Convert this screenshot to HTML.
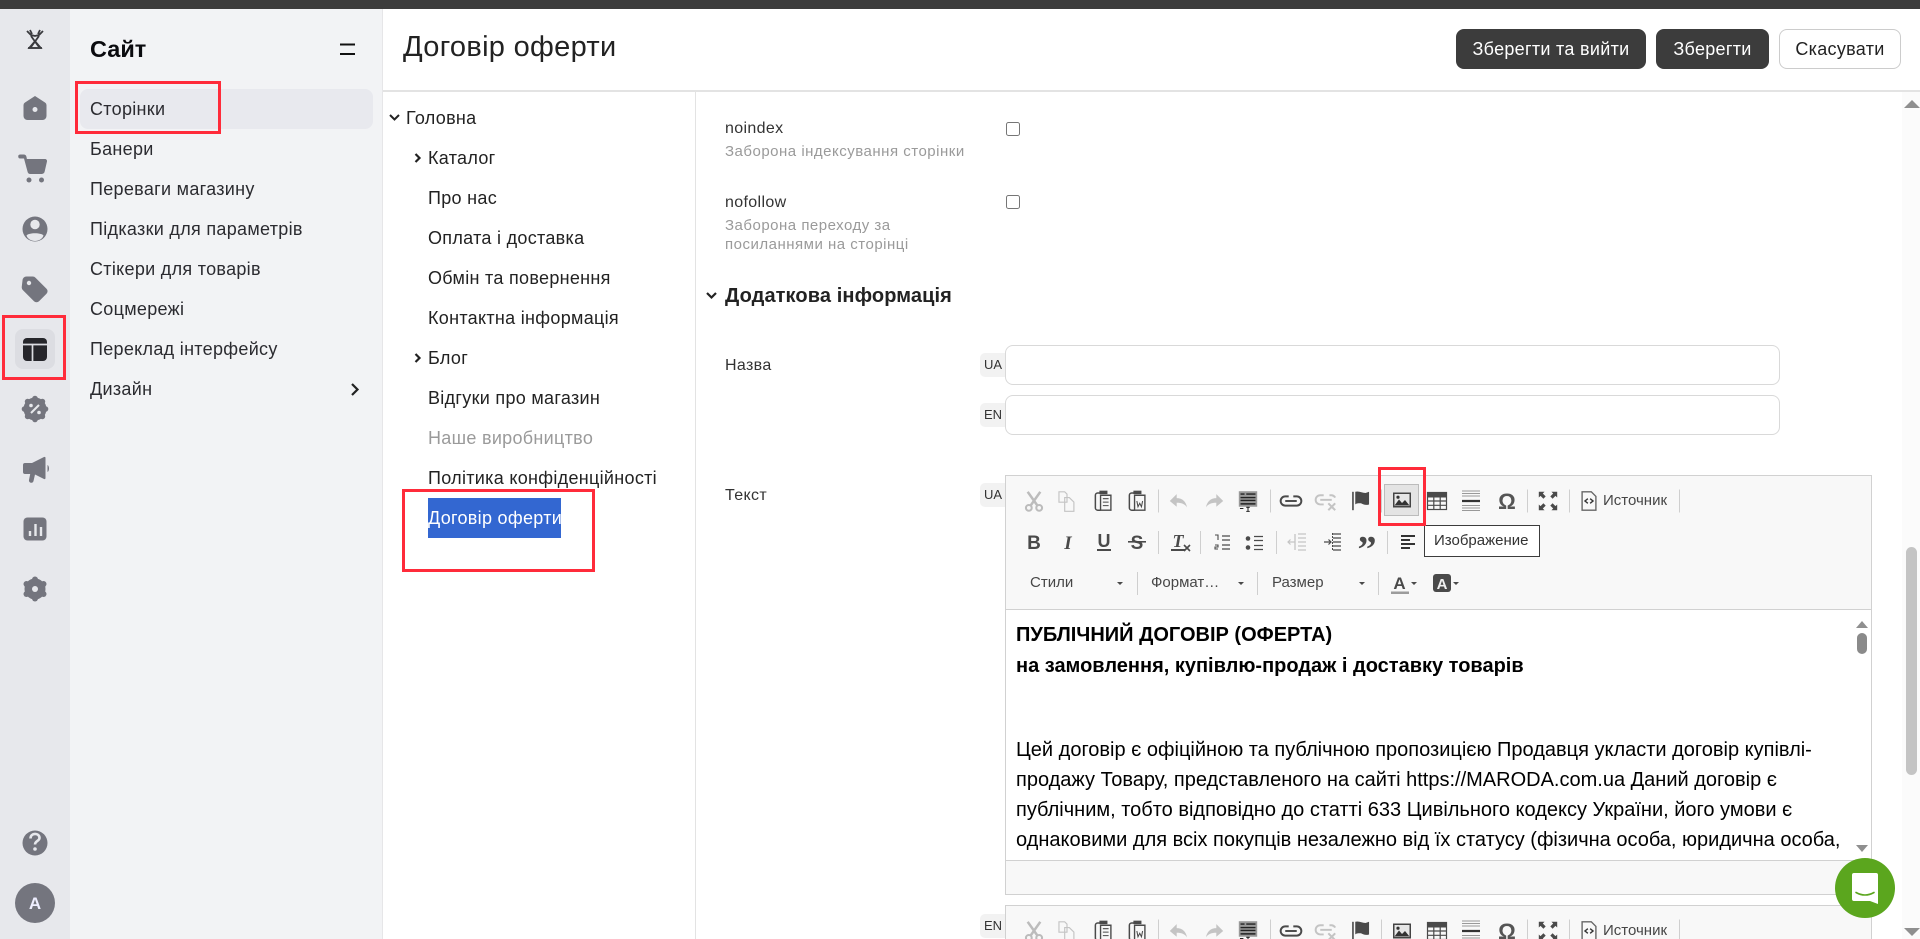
<!DOCTYPE html>
<html lang="uk"><head><meta charset="utf-8"><title>Договір оферти</title>
<style>
*{box-sizing:border-box}
html,body{margin:0;padding:0;width:1920px;height:939px;overflow:hidden;background:#fff}
body{position:relative;font-family:"Liberation Sans",sans-serif;color:#26262b}
.a{position:absolute}
.t{position:absolute;white-space:nowrap;line-height:40px;height:40px;font-size:18px}
.side{letter-spacing:.3px;color:#2b2b30}
.tree{letter-spacing:.3px;color:#222}
.lab{font-size:16px;letter-spacing:.35px;color:#333;margin-top:1px}
.sm{font-size:15px;letter-spacing:.5px;color:#9a9a9a}
.red{position:absolute;border:3px solid #ff2b3a}
.btn{position:absolute;top:29px;height:40px;border-radius:8px;line-height:40px;text-align:center;font-size:18px;letter-spacing:.3px;white-space:nowrap}
.dark{background:#3c3c3c;color:#fff}
.tag{position:absolute;left:980px;width:26px;height:24px;line-height:23px;background:#f2f2f2;border-radius:5px 0 0 5px;font-size:13px;color:#333;text-align:center}
.inp{position:absolute;left:1005px;width:775px;height:40px;border:1px solid #d9d9d9;border-radius:8px;background:#fff}
.cb{position:absolute;left:1006px;width:14px;height:14px;border:1.5px solid #767676;border-radius:2.5px;background:#fff}
.c{position:absolute;left:1016px;white-space:nowrap;font-size:20px;line-height:30px;height:30px;color:#000}
.k{position:absolute;white-space:nowrap;font-size:15px;line-height:20px;color:#474747}
</style></head><body>
<div class="a" style="left:0;top:0;width:1920px;height:9px;background:#3c3c3c"></div>
<div class="a" style="left:0;top:9px;width:70px;height:930px;background:#e7e8ec"></div>
<div class="a" style="left:70px;top:9px;width:313px;height:930px;background:#f2f3f5;border-right:1px solid #e6e6e8"></div>
<div class="a" style="left:383px;top:90px;width:1537px;height:2px;background:#e3e3e3"></div>
<div class="a" style="left:695px;top:91px;width:1px;height:848px;background:#e3e3e3"></div>
<div class="a" style="left:1902px;top:92px;width:18px;height:847px;background:#fbfbfb"></div>
<div class="a" style="left:1906px;top:547px;width:11px;height:228px;background:#c4c4c4;border-radius:6px"></div>
<div class="a" style="left:15px;top:329px;width:40px;height:40px;background:#dcdde2;border-radius:8px"></div>
<div class="a" style="left:80px;top:89px;width:293px;height:40px;background:#e8e9ee;border-radius:8px"></div>

<div class="t" style="left:90px;top:29px;font-size:23.500px;font-weight:700;color:#0b0b0f">Сайт</div>
<div class="t side" style="left:90px;top:89px">Сторінки</div>
<div class="t side" style="left:90px;top:129px">Банери</div>
<div class="t side" style="left:90px;top:169px">Переваги магазину</div>
<div class="t side" style="left:90px;top:209px">Підказки для параметрів</div>
<div class="t side" style="left:90px;top:249px">Стікери для товарів</div>
<div class="t side" style="left:90px;top:289px">Соцмережі</div>
<div class="t side" style="left:90px;top:329px">Переклад інтерфейсу</div>
<div class="t side" style="left:90px;top:369px">Дизайн</div>

<div class="t" style="left:403px;top:27px;font-size:29px;color:#222;letter-spacing:.3px">Договір оферти</div>
<div class="btn dark" style="left:1456px;width:190px">Зберегти та вийти</div>
<div class="btn dark" style="left:1656px;width:113px">Зберегти</div>
<div class="btn" style="left:1779px;width:122px;background:#fff;border:1px solid #ccc;color:#222;line-height:38px">Скасувати</div>

<div class="t tree" style="left:406px;top:98px">Головна</div>
<div class="t tree" style="left:428px;top:138px">Каталог</div>
<div class="t tree" style="left:428px;top:178px">Про нас</div>
<div class="t tree" style="left:428px;top:218px">Оплата і доставка</div>
<div class="t tree" style="left:428px;top:258px">Обмін та повернення</div>
<div class="t tree" style="left:428px;top:298px">Контактна інформація</div>
<div class="t tree" style="left:428px;top:338px">Блог</div>
<div class="t tree" style="left:428px;top:378px">Відгуки про магазин</div>
<div class="t tree" style="left:428px;top:418px;color:#9a9a9a">Наше виробництво</div>
<div class="t tree" style="left:428px;top:458px">Політика конфіденційності</div>
<div class="a" style="left:428px;top:498px;width:133px;height:40px;background:#3367d1"></div>
<div class="t tree" style="left:428px;top:498px;color:#fff">Договір оферти</div>

<div class="t lab" style="left:725px;top:108px">noindex</div>
<div class="t sm" style="left:725px;top:132px">Заборона індексування сторінки</div>
<div class="cb" style="top:122px"></div>
<div class="t lab" style="left:725px;top:182px">nofollow</div>
<div class="t sm" style="left:725px;top:206px">Заборона переходу за</div>
<div class="t sm" style="left:725px;top:225px">посиланнями на сторінці</div>
<div class="cb" style="top:195px"></div>
<div class="t" style="left:725px;top:276px;font-size:20px;font-weight:700;color:#222;letter-spacing:.1px">Додаткова інформація</div>
<div class="t lab" style="left:725px;top:345px">Назва</div>
<div class="tag" style="top:353px">UA</div>
<div class="inp" style="top:345px"></div>
<div class="tag" style="top:403px">EN</div>
<div class="inp" style="top:395px"></div>
<div class="t lab" style="left:725px;top:475px">Текст</div>
<div class="tag" style="top:483px">UA</div>
<div class="tag" style="top:914px">EN</div>

<!-- editor 1 -->
<div class="a" style="left:1005px;top:475px;width:867px;height:420px;background:#f8f8f8;border:1px solid #d1d1d1"></div>
<div class="a" style="left:1006px;top:609px;width:865px;height:252px;background:#fff;border-top:1px solid #d1d1d1;border-bottom:1px solid #d1d1d1"></div>
<div class="a" style="left:1005px;top:905px;width:867px;height:40px;background:#f8f8f8;border:1px solid #d1d1d1"></div>

<div class="c" style="top:620px;font-weight:700">ПУБЛІЧНИЙ ДОГОВІР (ОФЕРТА)</div>
<div class="c" style="top:651px;font-weight:700">на замовлення, купівлю-продаж і доставку товарів</div>
<div class="c" style="top:735px">Цей договір є офіційною та публічною пропозицією Продавця укласти договір купівлі-</div>
<div class="c" style="top:765px">продажу Товару, представленого на сайті https://MARODA.com.ua Даний договір є</div>
<div class="c" style="top:795px">публічним, тобто відповідно до статті 633 Цивільного кодексу України, його умови є</div>
<div class="c" style="top:825px">однаковими для всіх покупців незалежно від їх статусу (фізична особа, юридична особа,</div>

<div class="k" style="left:1030px;top:573px">Стили</div>
<div class="k" style="left:1151px;top:573px">Формат…</div>
<div class="k" style="left:1272px;top:573px">Размер</div>
<div class="k" style="left:1603px;top:491px">Источник</div>
<div class="k" style="left:1603px;top:921px">Источник</div>

<svg class="a" style="left:0;top:0" width="1920" height="939" viewBox="0 0 1920 939">
<defs>
<symbol id="cut" overflow="visible"><g transform="scale(1.15)"><path d="M-5.500-8 3 4M5.500-8-3 4" stroke="currentColor" stroke-width="2.200" fill="none"/><circle cx="-4.500" cy="6" r="2.500" fill="none" stroke="currentColor" stroke-width="1.800"/><circle cx="4.500" cy="6" r="2.500" fill="none" stroke="currentColor" stroke-width="1.800"/></g></symbol>
<symbol id="copy" overflow="visible"><g transform="scale(1.15)"><path d="M-7-8h5l2 2v7h-7zM-2-3h4l4 4v8h-8z" fill="#f8f8f8" stroke="currentColor" stroke-width="1"/></g></symbol>
<symbol id="paste" overflow="visible"><g transform="scale(1.15)"><path d="M-3-7h-2.500a2 2 0 0 0-2 2V6a2 2 0 0 0 2 2H-3" fill="none" stroke="currentColor" stroke-width="1.300"/><rect x="-4" y="-9" width="7" height="3" fill="currentColor"/><path d="M-3-5h9v13h-9z" fill="#f8f8f8" stroke="currentColor" stroke-width="1.200"/><path d="M-1-2h5M-1 1h5M-1 4h5" stroke="currentColor" stroke-width=".9"/></g></symbol>
<symbol id="pasteW" overflow="visible"><g transform="scale(1.15)"><path d="M-3-7h-2.500a2 2 0 0 0-2 2V6a2 2 0 0 0 2 2H-3" fill="none" stroke="currentColor" stroke-width="1.300"/><rect x="-4" y="-9" width="7" height="3" fill="currentColor"/><path d="M-3-5h9v13h-9z" fill="#f8f8f8" stroke="currentColor" stroke-width="1.200"/><path d="M-1 0l1 5 1.500-3 1.500 3 1-5" stroke="currentColor" fill="none" stroke-width=".9"/></g></symbol>
<symbol id="undo" overflow="visible"><g transform="scale(1.15)"><path d="M-8 0l6-6v3.500c5 0 8 3 9 8-2-3-5-4-9-4V5z" fill="currentColor"/></g></symbol>
<symbol id="redo" overflow="visible"><g transform="scale(1.15)"><path d="M8 0L2-6v3.500c-5 0-8 3-9 8 2-3 5-4 9-4V5z" fill="currentColor"/></g></symbol>
<symbol id="tpl" overflow="visible"><g transform="scale(1.15)"><rect x="-8" y="-8.500" width="16" height="13.500" fill="#999"/><path d="M-6.500-6h3.500M-1.500-6h8M-6.500-3h13M-6.500-.5h13M-6.500 2.500h13" stroke="#222" stroke-width="1.200"/><path d="M-7 6.500h3M0 5.500v3.500M-1.500 5.500h3M-1.500 9h3" stroke="#222" stroke-width=".9"/></g></symbol>
<symbol id="link" overflow="visible"><g transform="scale(1.15)"><path d="M-2-4h-3a4 4 0 0 0 0 8h10a4 4 0 0 0 0-8H2" fill="none" stroke="currentColor" stroke-width="1.700"/><path d="M-5 0H5" stroke="currentColor" stroke-width="1.700"/></g></symbol>
<symbol id="unlink" overflow="visible"><g transform="scale(1.15)"><path d="M-2-5h-3a4 4 0 0 0 0 8h3M3-5h2a4 4 0 0 1 3 2" fill="none" stroke="currentColor" stroke-width="1.700"/><path d="M-5-1H5" stroke="currentColor" stroke-width="1.700"/><path d="M2 2l6 6M8 2l-6 6" stroke="currentColor" stroke-width="1.800"/></g></symbol>
<symbol id="flag" overflow="visible"><g transform="scale(1.15)"><path d="M-7-8v16" stroke="currentColor" stroke-width="1.400"/><path d="M-5-8c3-1 6 1 9 1l3-1V3c-3 1-5 0-7-1-2 0-4 0-5 1z" fill="currentColor"/></g></symbol>
<symbol id="img" overflow="visible"><rect x="-9" y="-7.500" width="18" height="15" fill="#444"/><rect x="-7.500" y="-6" width="15" height="12" fill="#e6e6e6"/><circle cx="-4" cy="-2.800" r="1.600" fill="#333"/><path d="M-7.500 5.500l4.500-6 3 3.500 3-3 4.500 5.500z" fill="#333"/></symbol>
<symbol id="tbl" overflow="visible"><rect x="-9.500" y="-8.500" width="19" height="17" fill="#f8f8f8" stroke="currentColor" stroke-width="1.200"/><rect x="-9.500" y="-8.500" width="19" height="5" fill="currentColor"/><path d="M-9.500 0h19M-9.500 4.300h19M-3.200-3.500V8.500M3.200-3.500V8.500" stroke="currentColor" stroke-width="1.200"/></symbol>
<symbol id="hr" overflow="visible"><path d="M-9-10h18M-9-7.500h18M-9-5h18M-9 4.500h18M-9 7h18M-9 9.500h18" stroke="#999"/><path d="M-9 0h18" stroke="#333" stroke-width="2.200"/></symbol>
<symbol id="max" overflow="visible"><g transform="scale(1.15)"><path d="M-8-8h5l-1.500 1.500 2.500 2.500-2 2-2.500-2.500L-8-3zM8-8v5l-1.500-1.500-2.500 2.500-2-2 2.500-2.500L3-8zM-8 8v-5l1.500 1.500 2.500-2.500 2 2-2.500 2.500L-3 8zM8 8H3l1.500-1.500-2.500-2.500 2-2 2.500 2.500L8 3z" fill="currentColor"/></g></symbol>
<symbol id="src" overflow="visible"><g transform="scale(1.15)"><path d="M-6-8h8l4 4v12h-12z" fill="#f8f8f8" stroke="#666" stroke-width="1.200"/><path d="M-1-2l-2.500 2 2.500 2M1-2l2.500 2-2.500 2" stroke="#333" stroke-width="1.200" fill="none"/></g></symbol>
<symbol id="sep" overflow="visible"><rect x="0" y="-11.500" width="1" height="23" fill="#cfcfcf"/></symbol>
</defs>

<!-- rail icons -->
<g fill="#74757e">
<path d="M35 96 45 102.500a3 3 0 0 1 1.500 2.500V116a4 4 0 0 1-4 4h-15a4 4 0 0 1-4-4V105a3 3 0 0 1 1.500-2.500z"/><circle cx="35" cy="109.500" r="2.500" fill="#e7e8ec"/>
<path d="M20 154.500h3.500a3 3 0 0 1 3 2.500l.4 2H45a2 2 0 0 1 2 2.400l-2.300 10a3 3 0 0 1-3 2.600H30.500a3 3 0 0 1-3-2.500L24 158.500h-3.500a2 2 0 0 1-.5-4z"/><circle cx="29" cy="180" r="2.500"/><circle cx="41.500" cy="180" r="2.500"/>
<circle cx="35" cy="229" r="12.500"/><circle cx="35" cy="224.500" r="4.700" fill="#e7e8ec"/><path d="M26.500 235.500c2-3 15-3 17 0-1 3.500-5 5.500-8.500 5.500s-7.500-2-8.500-5.500z" fill="#e7e8ec"/>
<path d="M22.500 280.500a4 4 0 0 1 4-4h6a4 4 0 0 1 3 1.200l11 11a3.500 3.500 0 0 1 0 5l-7.500 7.500a3.500 3.500 0 0 1-5 0l-11-11a4 4 0 0 1-1.300-3z"/><circle cx="29" cy="283" r="2.200" fill="#e7e8ec"/>
<circle cx="35" cy="409" r="11.500"/><circle cx="45.500" cy="409" r="2.800"/><circle cx="24.500" cy="409" r="2.800"/><circle cx="35" cy="398.500" r="2.800"/><circle cx="35" cy="419.500" r="2.800"/><circle cx="42.400" cy="401.600" r="2.800"/><circle cx="27.600" cy="401.600" r="2.800"/><circle cx="42.400" cy="416.400" r="2.800"/><circle cx="27.600" cy="416.400" r="2.800"/>
<path d="M31 413l8-8" stroke="#e7e8ec" stroke-width="2"/><circle cx="31" cy="405.500" r="1.800" fill="#e7e8ec"/><circle cx="39" cy="412.500" r="1.800" fill="#e7e8ec"/>
<path d="M25 463h7l12-6a1 1 0 0 1 1.500 1v20a1 1 0 0 1-1.500 1l-9-4.500-1.500 6.500a2.300 2.300 0 0 1-4.500-1l1.200-6H25a2 2 0 0 1-2-2v-7a2 2 0 0 1 2-2z"/><path d="M47.500 465c2 1 2 6 0 7z"/>
<rect x="23.500" y="517.500" width="23" height="23" rx="4"/><path d="M30 531v5M35.500 524v12M41 527v9" stroke="#e7e8ec" stroke-width="2.400"/>
<circle cx="35" cy="589" r="10.500"/><circle cx="35" cy="579.500" r="3"/><circle cx="35" cy="598.500" r="3"/><circle cx="43.500" cy="584" r="3"/><circle cx="43.500" cy="594" r="3"/><circle cx="26.500" cy="584" r="3"/><circle cx="26.500" cy="594" r="3"/><circle cx="35" cy="589" r="3" fill="#e7e8ec"/>
<circle cx="35" cy="843" r="12.500"/><circle cx="35" cy="903" r="20"/>
</g>
<path d="M30.500 838.500c0-6 9-6 9-.5 0 3-4.500 3-4.500 6.500" fill="none" stroke="#e7e8ec" stroke-width="2.600"/><circle cx="35" cy="849" r="1.800" fill="#e7e8ec"/>
<text x="35" y="909" text-anchor="middle" font-family="Liberation Sans" font-weight="700" font-size="17" fill="#eef">A</text>
<rect x="23" y="338" width="24" height="23" rx="4" fill="#26262b"/><path d="M23 344.500h24M32.500 344.500V361" stroke="#dcdde2" stroke-width="1.700"/>
<!-- logo -->
<g fill="none" stroke="#3a3a3e" stroke-width="1.800"><path d="M27 31l4 4 4 1 4-1 4-4M30 30l2 4M40 30l-2 4M31 36l8 11M39 36l-8 11M28 48h14"/><path d="M35 41l6 7H29z" stroke-width="1.500"/></g>

<!-- small chevrons -->
<g fill="none" stroke="#222" stroke-width="2">
<path d="M340 44.500h15M340 54h15" stroke="#111"/>
<path d="M352 384l5.500 5.500-5.500 5.500" stroke-width="2.200"/>
<path d="M390 115l4.500 4.500 4.500-4.500"/>
<path d="M415.500 154l4 4-4 4" stroke-width="2.200"/>
<path d="M415.500 354l4 4-4 4" stroke-width="2.200"/>
<path d="M707 293l4.500 4.500 4.500-4.500" stroke-width="2.200"/>
</g>
<path d="M1904 108l8-8 8 8z" fill="#8f8f8f"/>
<path d="M1904 928h16l-8 8z" fill="#8f8f8f"/>

<!-- toolbar 1 -->
<rect x="1384.500" y="484.500" width="34" height="31" fill="#e4e4e4" stroke="#bcbcbc"/>
<g color="#4a4a4a">
<use href="#cut" x="1034" y="501" color="#bcbcbc"/><use href="#copy" x="1067" y="501" color="#c4c4c4"/><use href="#paste" x="1104" y="501"/><use href="#pasteW" x="1138" y="501"/>
<use href="#sep" x="1158" y="501"/>
<use href="#undo" x="1179" y="501" color="#c4c4c4"/><use href="#redo" x="1214" y="501" color="#c4c4c4"/><use href="#tpl" x="1248" y="501"/>
<use href="#sep" x="1270" y="501"/>
<use href="#link" x="1291" y="501"/><use href="#unlink" x="1326" y="501" color="#c4c4c4"/><use href="#flag" x="1361" y="501"/>
<use href="#sep" x="1381" y="501"/>
<use href="#img" x="1402" y="500"/><use href="#tbl" x="1437" y="501"/><use href="#hr" x="1471" y="501"/>
<text x="1507" y="509" text-anchor="middle" font-family="Liberation Sans" font-weight="700" font-size="22" fill="#555">Ω</text>
<use href="#sep" x="1527" y="501"/><use href="#max" x="1548" y="501"/><use href="#sep" x="1569" y="501"/><use href="#src" x="1589" y="501"/><use href="#sep" x="1679" y="501"/>
</g>
<g color="#4a4a4a">
<use href="#cut" x="1034" y="931" color="#bcbcbc"/><use href="#copy" x="1067" y="931" color="#c4c4c4"/><use href="#paste" x="1104" y="931"/><use href="#pasteW" x="1138" y="931"/>
<use href="#sep" x="1158" y="931"/>
<use href="#undo" x="1179" y="931" color="#c4c4c4"/><use href="#redo" x="1214" y="931" color="#c4c4c4"/><use href="#tpl" x="1248" y="931"/>
<use href="#sep" x="1270" y="931"/>
<use href="#link" x="1291" y="931"/><use href="#unlink" x="1326" y="931" color="#c4c4c4"/><use href="#flag" x="1361" y="931"/>
<use href="#sep" x="1381" y="931"/>
<use href="#img" x="1402" y="931"/><use href="#tbl" x="1437" y="931"/><use href="#hr" x="1471" y="931"/>
<text x="1507" y="939" text-anchor="middle" font-family="Liberation Sans" font-weight="700" font-size="22" fill="#555">Ω</text>
<use href="#sep" x="1527" y="931"/><use href="#max" x="1548" y="931"/><use href="#sep" x="1569" y="931"/><use href="#src" x="1589" y="931"/><use href="#sep" x="1679" y="931"/>
</g>
<!-- row 2 -->
<g font-family="Liberation Sans" font-size="19" font-weight="700" fill="#4a4a4a" text-anchor="middle">
<text x="1034" y="549">B</text>
<text x="1068" y="549" font-style="italic" font-family="Liberation Serif">I</text>
<text x="1104" y="547" font-size="18">U</text><rect x="1097" y="549" width="14" height="2"/>
<text x="1137" y="549">S</text><rect x="1128" y="541" width="18" height="1.600"/>
<text x="1178" y="547" font-style="italic" font-family="Liberation Serif" font-size="18">T</text><rect x="1171" y="549" width="14" height="2"/>
<path d="M1184 545l6 6M1190 545l-6 6" stroke="#4a4a4a" stroke-width="1.600"/>
</g>
<g stroke="#4a4a4a" fill="none">
<path d="M1222 536h8M1222 540h8M1222 545h8M1222 549h8" stroke-width="1.300"/><path d="M1215 535h3v5M1215 545h3v2h-3v2h3" stroke-width="1.100"/>
<path d="M1255 536.500h9M1255 540.500h9M1255 545.500h9M1255 549.500h9" stroke-width="1.300" transform="translate(-1)"/>
<circle cx="1248" cy="538.500" r="2.300" fill="#4a4a4a" stroke="none"/><circle cx="1248" cy="547.500" r="2.300" fill="#4a4a4a" stroke="none"/>
<path d="M1298 534h8M1298 538h8M1298 542h8M1298 546h8M1298 550h8M1295 534v16" stroke="#c4c4c4" stroke-width="1.300"/><path d="M1295 542h-7m2.500-2.500L1288 542l2.500 2.500" stroke="#c4c4c4" stroke-width="1.200"/>
<path d="M1333 534h8M1333 538h8M1333 542h8M1333 546h8M1333 550h8" stroke-width="1.300"/><path d="M1324 542h7m-2.500-2.500L1331 542l-2.500 2.500" stroke-width="1.200"/><path d="M1332.500 533v18" stroke-width="1" stroke-dasharray="2 1"/>
<path d="M1401 536h14M1401 540h9M1401 544h14M1401 548h9" stroke="#333" stroke-width="2"/>
</g>
<text x="1367" y="562" text-anchor="middle" font-family="Liberation Serif" font-weight="700" font-size="38" fill="#4a4a4a">”</text>
<g fill="#cfcfcf"><rect x="1158" y="531" width="1" height="23"/><rect x="1200" y="531" width="1" height="23"/><rect x="1276" y="531" width="1" height="23"/><rect x="1387" y="531" width="1" height="23"/>
<rect x="1137" y="572" width="1" height="23"/><rect x="1257" y="572" width="1" height="23"/><rect x="1378" y="572" width="1" height="23"/></g>
<!-- row 3 -->
<g fill="#4a4a4a"><path d="M1117 582h6l-3 3zM1238 582h6l-3 3zM1359 582h6l-3 3zM1411 582h6l-3 3zM1453 582h6l-3 3z"/></g>
<text x="1399.500" y="589" text-anchor="middle" font-family="Liberation Sans" font-weight="700" font-size="17" fill="#4a4a4a">A</text>
<rect x="1391" y="591.500" width="18" height="2.500" fill="#9c9c9c"/>
<rect x="1433" y="574" width="18" height="18" rx="3" fill="#4a4a4a"/>
<text x="1442" y="589" text-anchor="middle" font-family="Liberation Sans" font-weight="700" font-size="15" fill="#f0f0f0">A</text>
<!-- editor scrollbar -->
<path d="M1856 628l6-7 6 7z" fill="#8f8f8f"/><rect x="1857" y="633" width="10" height="21" rx="5" fill="#8a8a8a"/><path d="M1856 845h12l-6 7z" fill="#8f8f8f"/>
<!-- chat -->
<circle cx="1865" cy="888" r="30" fill="#5ba61e"/>
<path d="M1854 873h22a2 2 0 0 1 2 2v29l-8-3h-16a2 2 0 0 1-2-2v-24a2 2 0 0 1 2-2z" fill="#fff"/>
<path d="M1856 892.500q9 5 18 0" fill="none" stroke="#5ba61e" stroke-width="1.600" stroke-linecap="round"/>
</svg>

<div class="a" style="left:1424px;top:525px;width:116px;height:32px;background:#fff;border:1.500px solid #3c3c3c;font-size:15px;line-height:29px;padding-left:9px;color:#333;white-space:nowrap">Изображение</div>

<div class="red" style="left:2px;top:315px;width:64px;height:65px"></div>
<div class="red" style="left:75px;top:81px;width:146px;height:53px"></div>
<div class="red" style="left:402px;top:489px;width:193px;height:83px"></div>
<div class="red" style="left:1378px;top:467px;width:48px;height:59px"></div>
</body></html>
